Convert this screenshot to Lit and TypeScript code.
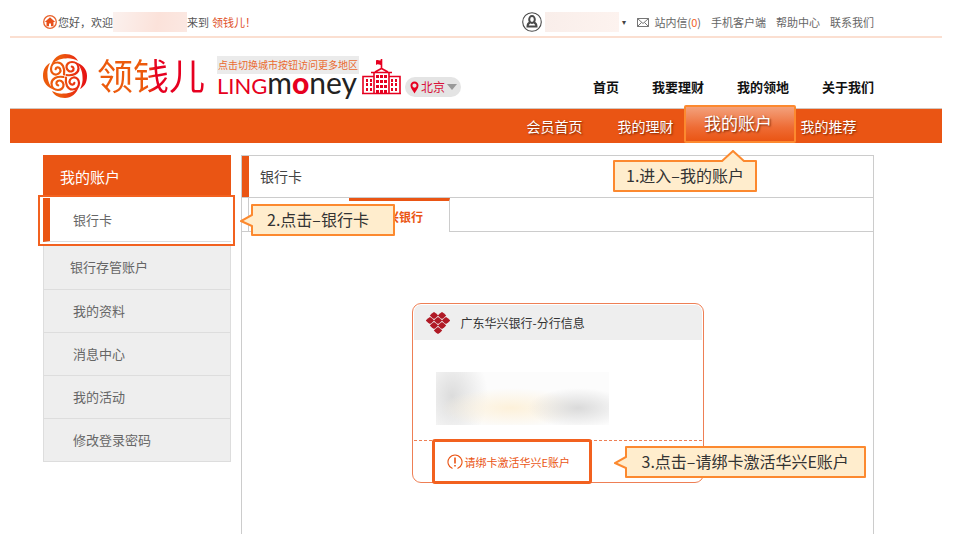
import { LitElement, html, css, svg } from "lit";
import { customElement, property } from "lit/decorators.js";
import { classMap } from "lit/directives/class-map.js";

/* Yellow hint bubble with a pointer on its top or left edge. */
@customElement("guide-tip")
class GuideTip extends LitElement {
  @property() side = "left";

  static styles = css`
    :host {
      display: block;
      width: max-content;
      box-sizing: border-box;
      height: 32px;
      padding: 0 14px;
      border: 2px solid #fc892f;
      border-radius: 1px;
      background: #ffedcd;
      color: #333;
      font-size: 16px;
      font-weight: 400;
      line-height: 26px;
      text-shadow: none;
      white-space: nowrap;
    }
    :host([side="top"]) {
      padding: 0 11px;
    }
    .pointer {
      position: absolute;
      fill: #ffedcd;
      stroke: #fc892f;
      stroke-width: 2;
    }
    .left {
      left: -13px;
      top: 6px;
    }
    .top {
      right: 9px;
      top: -12px;
    }
  `;

  render() {
    return html`<slot></slot>${this.side === "top"
        ? html`<svg class="pointer top" width="26" height="12"><path d="M1 12 L13 1 L25 12" /></svg>`
        : html`<svg class="pointer left" width="13" height="18"><path d="M13 1 L12 3 L1 9 L12 14 L13 17" /></svg>`}`;
  }
}

const swirl = (angle: number) => svg`
  <g transform="rotate(${angle} 22 22)">
    <path fill="#fff" d="M8 12 C10 4 16 0 22 0 C29 0 33 3 35 7 C31 5 27 4 23 4.500 C17 4.500 11 7 8 12Z" />
    <path fill="none" stroke="#fff" stroke-width="2.200" stroke-linecap="round"
      d="M21 20.500 C22 14 19.500 8.500 14.500 8.500 C10.500 8.500 8 11.500 8 15 C8 18.500 10.500 20.800 13.500 20.500 C16.800 20 18.300 17 17 14.700 C15.800 12.800 13 13 12.600 15.200" />
  </g>`;

const emblem = html`<svg class="emblem" width="44" height="44" viewBox="0 0 44 44" aria-hidden="true">
  <defs>
    <linearGradient id="warm"><stop offset="0.4" stop-color="#ec5a0c" /><stop offset="1" stop-color="#e60f14" /></linearGradient>
    <mask id="knots">${[0, 90, 180, 270].map(swirl)}</mask>
  </defs>
  <rect width="44" height="44" fill="url(#warm)" mask="url(#knots)" />
</svg>`;

const hall = html`<svg class="hall" width="39" height="37" viewBox="0 0 39 37" aria-hidden="true">
  <g fill="none" stroke="#e60020" stroke-width="1.6">
    <path d="M1 35.500V18.500H12M27 18.500H38V35.500M0 35.500H39M12 35.500V15M27 35.500V15M9 14.500H30M13 14L19.500 10.500L26 14M19.500 10V1" />
  </g>
  <path fill="#e60020" d="M14 2.500C16 1 18 4 20 1.500V6.500C18 8 16 5 14 7Z" />
  <g fill="#e60020">
    ${[4, 8].map((x) => [21, 25, 30].map((y) => svg`<rect x=${x} y=${y} width="2" height="3" />`))}
    ${[14, 18, 22].map((x) => [17, 22, 27].map((y) => svg`<rect x=${x} y=${y} width="3" height="3" />`))}
    ${[29, 33].map((x) => [21, 25, 30].map((y) => svg`<rect x=${x} y=${y} width="2" height="3" />`))}
    <rect x="14" y="32" width="3" height="3" /><rect x="18" y="32" width="3" height="3" /><rect x="22" y="32" width="3" height="3" />
  </g>
</svg>`;

const homeIcon = html`<svg width="14" height="14" viewBox="0 0 14 14" aria-hidden="true">
  <circle cx="7" cy="7" r="6.300" fill="none" stroke="#e8622c" stroke-width="1.300" />
  <path fill="#e8501a" d="M7 2.200L1.800 7H3.500V11.200H6V8.500H8V11.200H10.500V7H12.200Z" />
</svg>`;

const avatarIcon = html`<svg width="20" height="20" viewBox="0 0 20 20" fill="none" stroke="#4a4a4a" aria-hidden="true">
  <circle cx="10" cy="10" r="9.300" stroke-width="1.100" />
  <ellipse cx="10" cy="7.500" rx="2.800" ry="3.400" stroke-width="2" />
  <path stroke-width="2" d="M8 10.500C5.500 11.500 5.500 13 5.500 14.500H14.500C14.500 13 14.500 11.500 12 10.500" />
</svg>`;

const mailIcon = html`<svg width="12" height="9" viewBox="0 0 12 9" fill="none" stroke="#666" aria-hidden="true">
  <path d="M.5 .5H11.500V8.500H.5ZM.5 .5L6 5.500L11.500 .5M.5 8.500L4.500 4.500M11.500 8.500L7.500 4.500" stroke-width="0.9" />
</svg>`;

const pinIcon = html`<svg width="9" height="13" viewBox="0 0 9 13" aria-hidden="true">
  <path fill="#e60020" fill-rule="evenodd" d="M4.500 .5A4 4 0 0 0 .5 4.700C.5 7.500 3.500 10 4.500 12.500C5.500 10 8.500 7.500 8.500 4.700A4 4 0 0 0 4.500 .5ZM4.500 2.500A2 2 0 1 1 4.500 6.700A2 2 0 1 1 4.500 2.500Z" />
</svg>`;

const stars: [number, number][] = [
  [8, 3.5], [16, 3.5], [4, 8.5], [12, 8.5], [20, 8.5], [8, 13.5], [16, 13.5], [12, 18.5],
];
const bankIcon = html`<svg width="24" height="22" viewBox="0 0 24 22" fill="#b01a26" aria-hidden="true">
  ${stars.map(([x, y]) => svg`<path transform="translate(${x} ${y})" d="M0 -3.500L2.200 -2L4.200 0L2.200 2L0 3.500L-2.200 2L-4.200 0L-2.200 -2Z" />`)}
</svg>`;

const alertIcon = html`<svg width="16" height="16" viewBox="0 0 16 16" fill="none" stroke="#ea5414" aria-hidden="true">
  <path d="M5.500 14.600A7 7 0 1 1 10.500 14.600" stroke-width="1.100" />
  <path d="M8 3.500V9.500M8 11V12.500" stroke-width="1.600" />
</svg>`;

@customElement("app-root")
class AppRoot extends LitElement {
  static styles = css`
    :host {
      display: block;
      background: #fff;
      color: #555;
      font-family: "Noto Sans CJK SC", "Liberation Sans", sans-serif;
      font-size: 11px;
      line-height: 20px;
    }
    a {
      color: inherit;
      text-decoration: none;
    }
    ul {
      list-style: none;
      margin: 0;
      padding: 0;
    }
    svg {
      display: block;
      flex: none;
    }
    button {
      border: 0;
      padding: 0;
      background: none;
      color: inherit;
      font: inherit;
      cursor: pointer;
    }
    .page {
      margin: 0 23px 0 10px;
    }
    .inner {
      padding: 0 68px 0 33px;
    }
    .topbar {
      display: flex;
      align-items: center;
      justify-content: space-between;
      box-sizing: border-box;
      height: 38px;
      padding-top: 8px;
      border-bottom: 2px solid #fbdfd1;
      white-space: nowrap;
    }
    .greeting,
    .account,
    .links,
    .message {
      display: flex;
      align-items: center;
    }
    .greeting svg {
      margin-right: 1px;
    }
    .masked {
      width: 74px;
      height: 20px;
      background: linear-gradient(100deg, #fbf1ee, #fbe2da 60%, #fbe8e2);
    }
    .account .masked {
      background: linear-gradient(100deg, #f9eeea, #fdf3ef);
    }
    .brand-link {
      margin-left: 3px;
      color: #e0522a;
    }
    .account {
      gap: 3px;
      margin-right: 1px;
    }
    .caret {
      width: 4px;
      font-size: 8px;
      color: #444;
    }
    .links {
      gap: 10px;
      color: #666;
    }
    .message {
      gap: 5px;
    }
    .count {
      color: #f2611f;
    }
    .header {
      display: flex;
      align-items: flex-end;
      box-sizing: border-box;
      height: 71px;
      padding-bottom: 10px;
      border-bottom: 1px solid #d3c7bf;
      white-space: nowrap;
    }
    .brand {
      display: flex;
      align-items: flex-end;
    }
    .name {
      margin-left: 10px;
      padding-bottom: 2px;
      font-size: 36px;
      font-weight: 400;
      line-height: 44px;
      background: linear-gradient(90deg, #ec5a0c 45%, #e60020 55%);
      background-clip: text;
      -webkit-background-clip: text;
      color: transparent;
    }
    .latin {
      display: flex;
      flex-direction: column;
      margin-left: 12px;
    }
    .city-hint {
      width: 142px;
      height: 18px;
      background: #ebebeb;
      color: #ea6a30;
      font-size: 10px;
      line-height: 17px;
      text-align: center;
    }
    .word {
      height: 24px;
      font-family: Lato, sans-serif;
      font-size: 30px;
      line-height: 16px;
      color: #222;
    }
    .caps {
      font-size: 22px;
    }
    .hot {
      color: #e60020;
    }
    .hot.round {
      font-weight: 900;
    }
    .hall {
      margin: 0 4px 3px 3px;
    }
    .city {
      display: flex;
      align-items: center;
      gap: 2px;
      height: 20px;
      margin-bottom: 1px;
      padding: 0 4px 0 5px;
      border-radius: 10px;
      background: #e4e4e4;
      color: #d9123a;
      font-size: 12px;
    }
    .mainnav {
      display: flex;
      gap: 33px;
      margin-left: auto;
      color: #111;
      font-size: 13px;
      font-weight: 700;
      line-height: 22px;
    }
    .subnav {
      display: flex;
      justify-content: flex-end;
      height: 34px;
      background: #ea5514;
      color: #fff;
      font-size: 14px;
      line-height: 35px;
      text-align: center;
      text-shadow: 1px 1px 2px #7a2500;
    }
    .subnav li {
      width: 91px;
    }
    .subnav .current {
      position: relative;
      z-index: 4;
      box-sizing: border-box;
      width: 112px;
      height: 38px;
      margin: -4px -13px 0 -7px;
      padding-right: 4px;
      border: 2px solid #fc892f;
      border-radius: 2px;
      background: linear-gradient(#f3a17c, #ee6c35 60%, #ea5514);
      font-size: 17px;
      line-height: 32px;
    }
    .tip {
      position: absolute;
      z-index: 3;
    }
    .tip-nav {
      left: -73px;
      top: 53px;
    }
    .tip-side {
      left: 211px;
      top: 7px;
      min-width: 144px;
    }
    .tip-card {
      left: 193px;
      top: 7px;
      padding: 0 15px;
    }
    .body {
      display: flex;
      align-items: flex-start;
      gap: 10px;
      margin-top: 12px;
    }
    .side {
      flex: none;
      width: 188px;
      font-size: 13px;
      color: #666;
    }
    .side-title {
      margin: 0;
      padding-left: 17px;
      background: #ea5514;
      color: #fff;
      font-size: 15px;
      font-weight: 400;
      line-height: 43px;
    }
    .side li {
      box-sizing: border-box;
      height: 43px;
      padding-left: 29px;
      border: 1px solid #ddd;
      border-top: 0;
      background: #eee;
      line-height: 42px;
    }
    .side .selected {
      position: relative;
      z-index: 3;
      height: 51px;
      margin: -3px -4px 0 -5px;
      padding: 1px 2px 3px 3px;
      border: 2px solid #f2611f;
      background: #fff;
    }
    .selected-link {
      display: block;
      height: 43px;
      padding-left: 23px;
      border-left: 7px solid #ea5514;
      border-bottom: 1px solid #ddd;
      line-height: 43px;
    }
    .side .deposit {
      height: 44px;
      padding-left: 26px;
    }
    .main {
      flex: 1;
      min-width: 0;
      border: 1px solid #ccc;
      border-bottom: 0;
      padding-bottom: 52px;
    }
    .title {
      margin: 0;
      padding-left: 11px;
      border-left: 7px solid #ea5514;
      color: #444;
      font-size: 14px;
      font-weight: 400;
      line-height: 41px;
    }
    .tabs {
      display: flex;
      height: 35px;
      box-sizing: border-box;
      border-top: 1px solid #ccc;
      border-bottom: 1px solid #ccc;
    }
    .tabs-lead {
      width: 100px;
      margin-left: 6px;
      border-left: 1px solid #ccc;
    }
    .tab {
      box-sizing: border-box;
      width: 101px;
      height: 34px;
      border-top: 3px solid #ea5514;
      border-right: 1px solid #ccc;
      background: #fff;
      color: #ea5514;
      font-size: 12px;
      font-weight: 700;
      line-height: 28px;
    }
    .card {
      position: relative;
      box-sizing: border-box;
      width: 292px;
      margin: 71px auto 0;
      border: 1px solid #ee7f55;
      border-radius: 9px;
      padding: 1px;
    }
    .card-title {
      display: flex;
      align-items: center;
      gap: 11px;
      margin: 0;
      height: 35px;
      padding-left: 12px;
      border-radius: 7px 7px 0 0;
      background: #eee;
      color: #333;
      font-size: 12px;
      font-weight: 400;
    }
    .card-body {
      padding: 32px 22px 15px;
      border-bottom: 1px dashed #ee7f55;
    }
    .card-mask {
      width: 173px;
      height: 53px;
      background:
        radial-gradient(ellipse 50px 20px at 142px 36px, #dadada, transparent),
        radial-gradient(ellipse 70px 20px at 75px 36px, #fdf1da, transparent),
        radial-gradient(ellipse 36px 50px at 16px 24px, #dcdcdc, transparent),
        #fcfcfc;
    }
    .card-foot {
      position: relative;
      width: max-content;
      margin: -2px 0 -3px 18px;
    }
    .activate {
      display: flex;
      align-items: center;
      gap: 2px;
      box-sizing: border-box;
      width: 160px;
      height: 45px;
      padding-left: 12px;
      border: 3px solid #f2611f;
      border-radius: 3px;
      background: #fff;
      color: #ea5514;
    }
  `;

  private side = ["我的资料", "消息中心", "我的活动", "修改登录密码"];
  private sub = ["会员首页", "我的理财", "我的账户", "我的推荐"];

  render() {
    return html`
      <div class="page">
        <div class="topbar inner">
          <div class="greeting">
            ${homeIcon}<span>您好，欢迎</span><span class="masked"></span><span>来到</span>
            <a class="brand-link" href="#">领钱儿！</a>
          </div>
          <div class="links">
            <button class="account" aria-label="我的账户">
              ${avatarIcon}<span class="masked"></span><span class="caret">▾</span>
            </button>
            <a class="message" href="#">${mailIcon}<span>站内信(<span class="count">0</span>)</span></a>
            <a href="#">手机客户端</a>
            <a href="#">帮助中心</a>
            <a href="#">联系我们</a>
          </div>
        </div>

        <header class="header inner">
          <a class="brand" href="#">
            ${emblem}
            <span class="name">领钱儿</span>
            <span class="latin">
              <span class="city-hint">点击切换城市按钮访问更多地区</span>
              <span class="word"><span class="hot caps">LING</span>m<span class="hot round">o</span>ney</span>
            </span>
            ${hall}
          </a>
          <button class="city">
            ${pinIcon}北京<svg width="10" height="6" aria-hidden="true"><path fill="#999" d="M0 0H10L5 6Z" /></svg>
          </button>
          <nav class="mainnav">
            <a href="#">首页</a><a href="#">我要理财</a><a href="#">我的领地</a><a href="#">关于我们</a>
          </nav>
        </header>

        <nav>
          <ul class="subnav inner">
            ${this.sub.map((label, i) => html`<li class=${classMap({ current: i === 2 })}>
              <a href="#">${label}</a>
              ${i === 2 ? html`<guide-tip class="tip tip-nav" side="top">1.进入–我的账户</guide-tip>` : ""}
            </li>`)}
          </ul>
        </nav>

        <div class="body inner">
          <aside class="side">
            <h2 class="side-title">我的账户</h2>
            <ul>
              <li class="selected">
                <a class="selected-link" href="#">银行卡</a>
                <guide-tip class="tip tip-side">2.点击–银行卡</guide-tip>
              </li>
              <li class="deposit"><a href="#">银行存管账户</a></li>
              ${this.side.map((label) => html`<li><a href="#">${label}</a></li>`)}
            </ul>
          </aside>

          <main class="main">
            <h1 class="title">银行卡</h1>
            <div class="tabs">
              <span class="tabs-lead"></span>
              <button class="tab">华兴银行</button>
            </div>
            <section class="card">
              <h2 class="card-title">${bankIcon}广东华兴银行-分行信息</h2>
              <div class="card-body"><div class="card-mask"></div></div>
              <div class="card-foot">
                <button class="activate">${alertIcon}请绑卡激活华兴E账户</button>
                <guide-tip class="tip tip-card">3.点击–请绑卡激活华兴E账户</guide-tip>
              </div>
            </section>
          </main>
        </div>
      </div>
    `;
  }
}
